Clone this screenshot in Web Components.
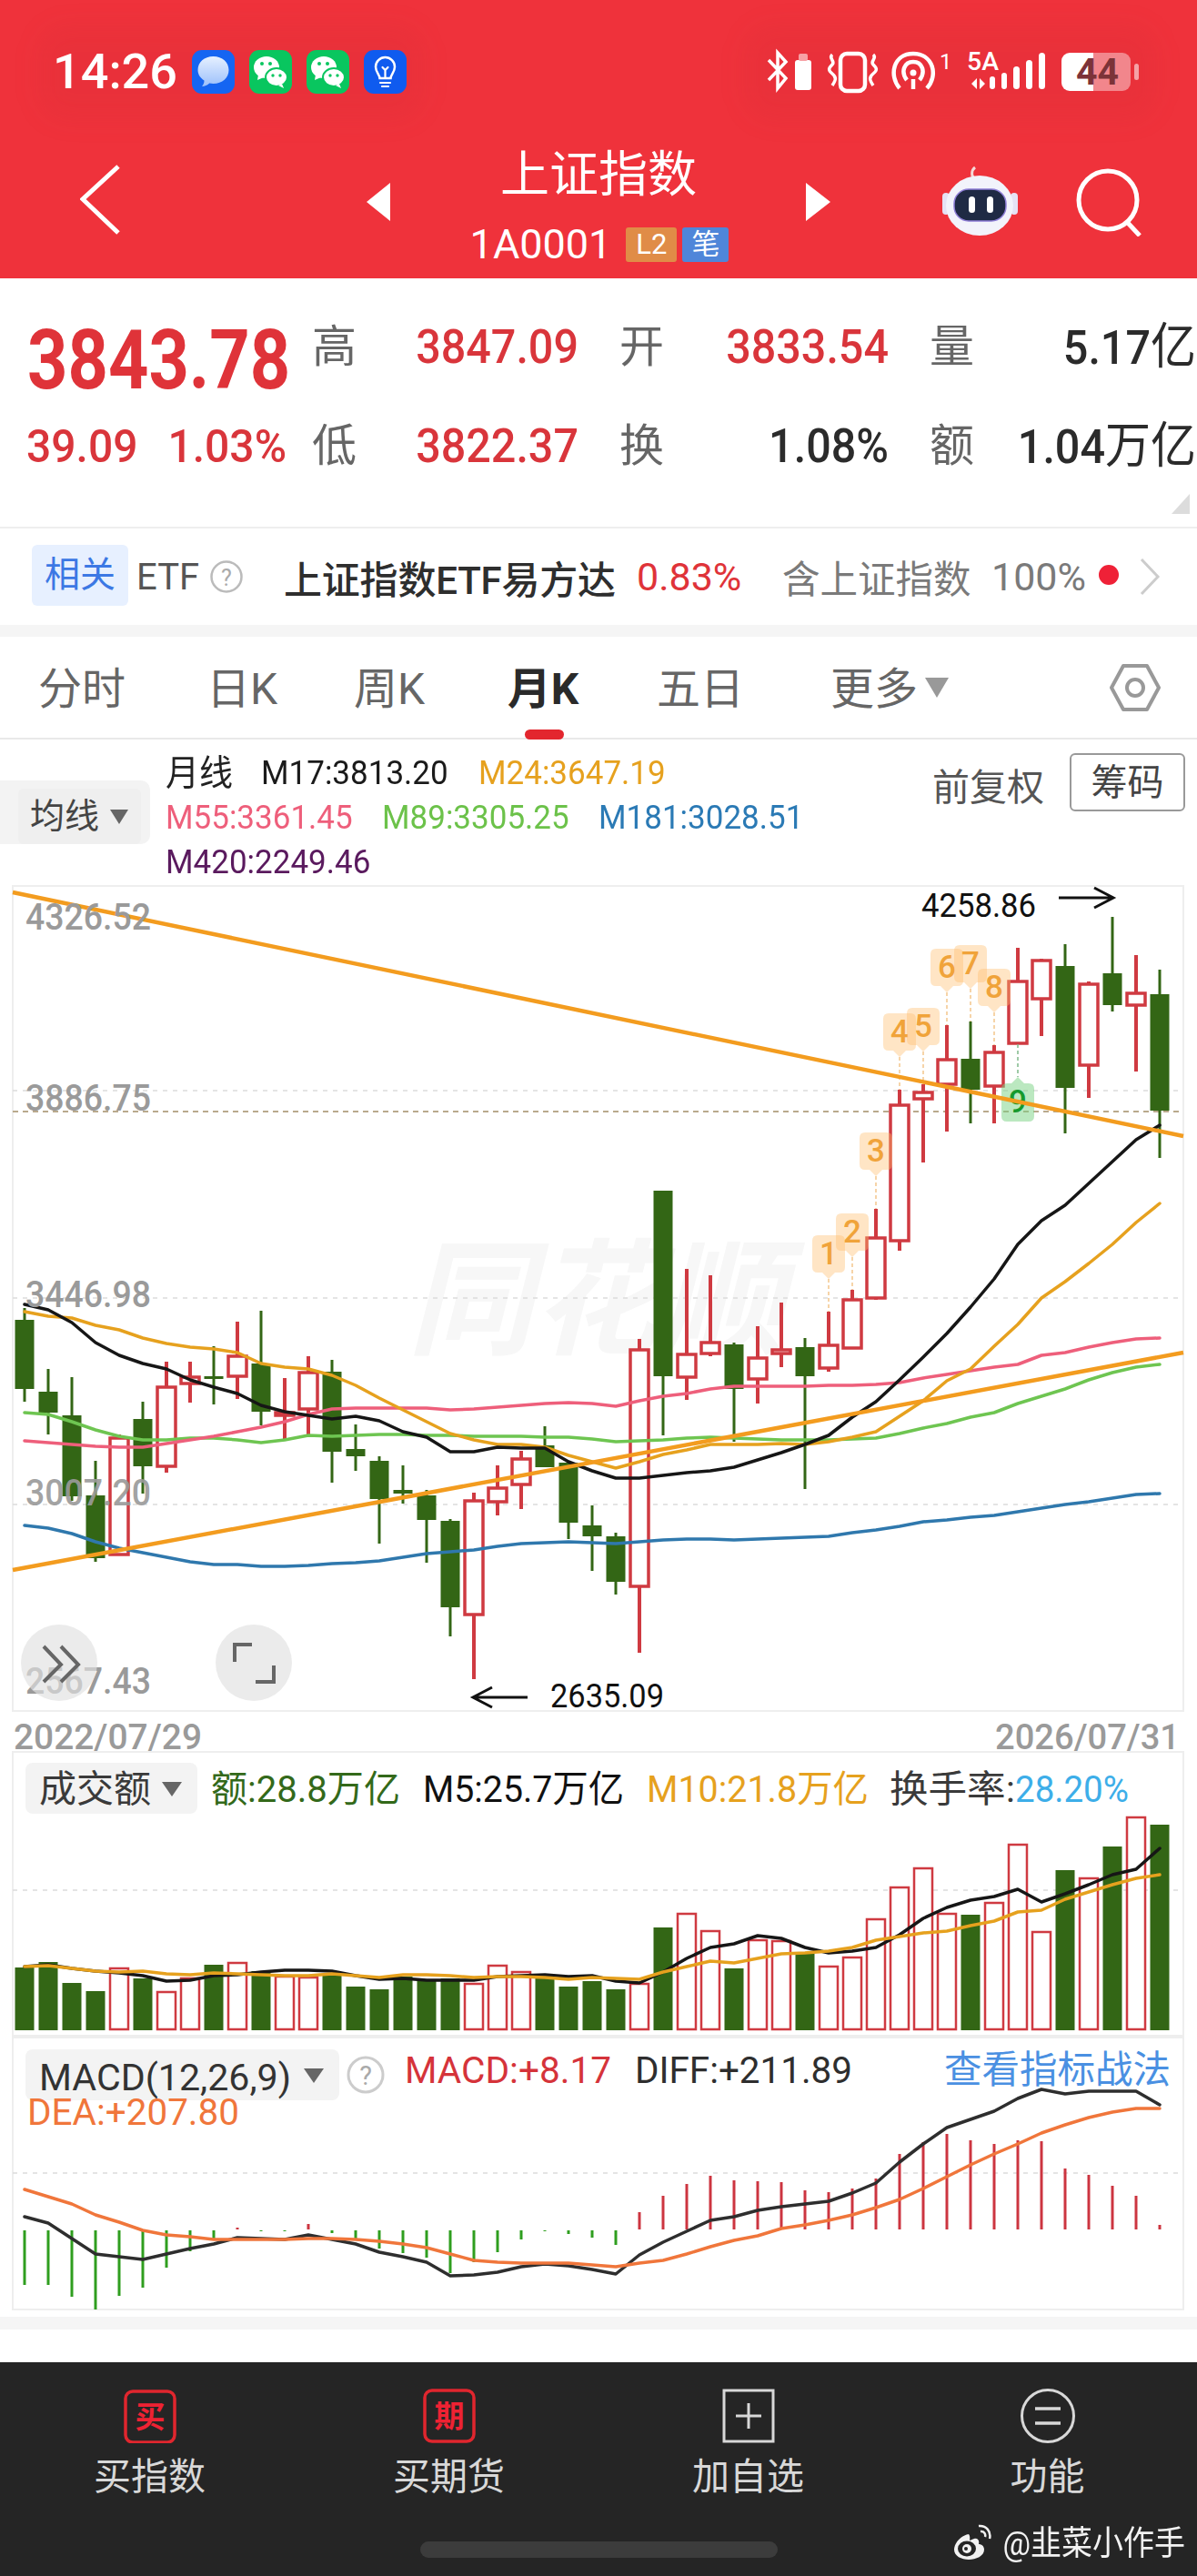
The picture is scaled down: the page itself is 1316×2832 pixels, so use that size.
<!DOCTYPE html>
<html lang="zh">
<head>
<meta charset="utf-8">
<title>上证指数</title>
<style>
  html, body { margin: 0; padding: 0; background: #fff; }
  body { width: 1316px; font-family: Roboto, "Noto Sans CJK SC", sans-serif; }
</style>
</head>
<body>
<quote-header></quote-header>
<quote-stats></quote-stats>
<etf-strip></etf-strip>
<period-tabs></period-tabs>
<ma-legend></ma-legend>
<kline-chart></kline-chart>
<volume-chart></volume-chart>
<macd-chart></macd-chart>
<bottom-bar></bottom-bar>

<script>
const RED = '#cf3a41'
const GREEN = '#336615'
const xAt = i => 27 + 26 * i

const line = (ys, color, width) => {
  const pts = ys.map((y, i) => `${xAt(i)},${y}`).join(' ')
  return `<polyline points="${pts}" fill="none" stroke="${color}" stroke-width="${width}" stroke-linejoin="round" stroke-linecap="round"/>`
}

// text fit to the width measured on the reference
const label = (x, y, str, color, len, size = 40, extra = '') =>
  `<text x="${x}" y="${y}" fill="${color}" font-size="${size}" textLength="${len}" lengthAdjust="spacingAndGlyphs" ${extra}>${str}</text>`

const dashed = (y, color = '#dcdcdc', w = 1.5, dash = '5 6') =>
  `<line x1="14" x2="1301" y1="${y}" y2="${y}" stroke="${color}" stroke-width="${w}" stroke-dasharray="${dash}"/>`

const caret = (x, y, w = 22, h = 16, color = '#666') =>
  `<path d="M${x} ${y}h${w}l${-w / 2} ${h}z" fill="${color}"/>`

class QuoteHeader extends HTMLElement {
  constructor () {
    super()
    this.shadow = this.attachShadow({ mode: 'open' })
  }

  connectedCallback () {
    this.render()
  }

  render () {
    this.shadow.innerHTML = /* html */ `
      <style>
        :host { display: block; height: 306px; background: #ef323b; color: #fff; position: relative; overflow: hidden; }
        .shade { position: absolute; top: 30px; height: 100px; background: rgba(190, 40, 50, .1); filter: blur(14px); border-radius: 30px; }
        .status { position: relative; height: 150px; padding: 55px 61px 0 58px; box-sizing: border-box; display: flex; justify-content: space-between; }
        .left { display: flex; gap: 16px; height: 48px; align-items: center; }
        .time { font-size: 54px; font-weight: 500; line-height: 48px; width: 136px; margin-right: 1px; }
        .app { width: 47px; height: 48px; display: block; }
        .right { width: 412px; height: 56px; margin-top: -5px; display: block; }
        .title-row { position: relative; height: 156px; display: grid; grid-template-columns: 403px 27px 456px 27px 403px; align-items: center; }
        .back { padding-left: 88px; margin-top: -16px; height: 80px; }
        .tri { display: block; width: 27px; height: 42px; margin-top: -12px; }
        .center { display: flex; flex-direction: column; align-items: center; margin-top: -5px; }
        .name { font-size: 54px; line-height: 58px; font-weight: 400; }
        .code { display: flex; align-items: center; margin-top: 28px; height: 38px; transform: translateX(1px); }
        .code b { font-weight: 400; font-size: 45px; line-height: 38px; margin-right: 16px; }
        .tag { height: 38px; line-height: 38px; text-align: center; font-size: 31px; border-radius: 3px; }
        .l2 { width: 56px; background: #e08c47; margin-right: 6px; }
        .bi { width: 51px; background: #4f86d9; }
        .acts { display: flex; justify-content: flex-end; padding-right: 58px; gap: 62px; margin-top: -16px; }
      </style>
      <div class="shade" style="left:44px;width:420px"></div>
      <div class="shade" style="left:820px;width:450px"></div>
      <div class="status">
        <div class="left">
          <span class="time">14:26</span>
          <svg class="app" viewBox="0 0 47 48"><rect width="47" height="48" rx="11" fill="#1565f2"/><defs><linearGradient id="bub" x1="0" y1="0" x2="0" y2="1"><stop offset="0" stop-color="#e6f0ff"/><stop offset="1" stop-color="#9cc0fb"/></linearGradient></defs><path d="M23.500 7c10 0 17 6.500 17 15s-7 15-17 15c-1.500 0-3-.2-4.300-.5-2 2.300-5.200 3.500-8.200 3.500 1.800-2 2.600-4.200 2.500-6.500C9.500 31 6.500 27 6.500 22c0-8.500 7-15 17-15z" fill="url(#bub)"/></svg>
          <svg class="app" viewBox="0 0 47 48"><rect width="47" height="48" rx="11" fill="#09c65f"/><ellipse cx="19" cy="19" rx="14" ry="12" fill="#fff"/><path d="M10 27l-1 6 7-3z" fill="#fff"/><ellipse cx="30" cy="30" rx="12" ry="10" fill="#fff" stroke="#09c65f" stroke-width="2"/><path d="M36 37l2 5-6-3z" fill="#fff"/><circle cx="14" cy="15" r="2" fill="#09c65f"/><circle cx="23" cy="15" r="2" fill="#09c65f"/><circle cx="26" cy="28" r="1.700" fill="#09c65f"/><circle cx="34" cy="28" r="1.700" fill="#09c65f"/></svg>
          <svg class="app" viewBox="0 0 47 48"><rect width="47" height="48" rx="11" fill="#09c65f"/><ellipse cx="19" cy="19" rx="14" ry="12" fill="#fff"/><path d="M10 27l-1 6 7-3z" fill="#fff"/><ellipse cx="30" cy="30" rx="12" ry="10" fill="#fff" stroke="#09c65f" stroke-width="2"/><path d="M36 37l2 5-6-3z" fill="#fff"/><circle cx="14" cy="15" r="2" fill="#09c65f"/><circle cx="23" cy="15" r="2" fill="#09c65f"/><circle cx="26" cy="28" r="1.700" fill="#09c65f"/><circle cx="34" cy="28" r="1.700" fill="#09c65f"/></svg>
          <svg class="app" viewBox="0 0 47 48"><rect width="47" height="48" rx="11" fill="#0f5bef"/><path d="M17.500 31c0-4-4.500-6.500-4.500-12.500a10.500 10.500 0 0 1 21 0c0 6-4.500 8.500-4.500 12.500z" fill="none" stroke="#fff" stroke-width="2.500"/><path d="M18 36h11M20 40h7M23.500 31v-9l-3-3M23.500 22l3-3" fill="none" stroke="#fff" stroke-width="2.200" stroke-linecap="round"/></svg>
        </div>
        <svg class="right" viewBox="846 50 412 56">
          <path d="M848 66l19 20-9 11V58l9 10-19 20" fill="none" stroke="#fff" stroke-width="3.500"/>
          <rect x="877" y="66" width="18" height="33" rx="3" fill="#fff"/><rect x="881" y="59" width="10" height="8" rx="2" fill="#f7a0a4"/>
          <rect x="927" y="59" width="27" height="41" rx="7" fill="none" stroke="#fff" stroke-width="4.500"/>
          <path d="M918 60c-5 4 4 7 0 11s-5 6 0 10 4 7 0 13M963 60c5 4-4 7 0 11s5 6 0 10-4 7 0 13" fill="none" stroke="#fff" stroke-width="3.500"/>
          <path d="M992 97c-12-14-7-38 15-38s28 24 15 38M1000 88c-7-9-3-20 7-20s14 11 7 20M1007 87v11" fill="none" stroke="#fff" stroke-width="4.500"/>
          <circle cx="1007" cy="80" r="3.500" fill="#fff"/>
          <text x="1036" y="76" fill="#fff" font-size="24">1</text>
          <text x="1066" y="77" fill="#fff" font-size="27" font-weight="500" textLength="35" lengthAdjust="spacingAndGlyphs">5A</text>
          <path d="M1071 92l6-6v12zM1086 92l-6-6v12z" fill="#fff"/>
          <rect x="1091" y="84" width="6" height="14" rx="3" fill="#fff"/>
          <rect x="1104" y="80" width="6" height="18" rx="3" fill="#fff"/>
          <rect x="1117" y="73" width="7" height="25" rx="3.500" fill="#fff"/>
          <rect x="1131" y="66" width="7" height="32" rx="3.500" fill="#fff"/>
          <rect x="1145" y="58" width="7" height="40" rx="3.500" fill="#fff"/>
          <path d="M1205 58h-26a9 9 0 0 0-9 9v24a9 9 0 0 0 9 9h26z" fill="#fff"/>
          <path d="M1205 58h32a9 9 0 0 1 9 9v24a9 9 0 0 1-9 9h-32z" fill="#fff" fill-opacity=".42"/>
          <rect x="1250" y="70" width="5" height="18" rx="2.500" fill="#fff" fill-opacity=".55"/>
          <text x="1186" y="93" fill="#7c3338" font-size="41" font-weight="700" textLength="47" lengthAdjust="spacingAndGlyphs">44</text>
        </svg>
      </div>
      <div class="title-row">
        <div class="back"><svg width="44" height="80" viewBox="88 180 44 80"><path d="M130 183l-39 36 39 37" fill="none" stroke="#fff" stroke-width="5"/></svg></div>
        <svg class="tri" viewBox="403 201 27 42"><path d="M429 201l-26 21 26 21z" fill="#fff"/></svg>
        <div class="center">
          <div class="name">上证指数</div>
          <div class="code"><b>1A0001</b><span class="tag l2">L2</span><span class="tag bi">笔</span></div>
        </div>
        <svg class="tri" viewBox="886 201 27 42"><path d="M886 201l27 21-27 21z" fill="#fff"/></svg>
        <div class="acts">
          <svg width="84" height="80" viewBox="1037 180 84 80">
            <path d="M1073 196c-5-2-4-9 0-12" fill="none" stroke="#f5d9d9" stroke-width="3"/>
            <rect x="1037" y="212" width="8" height="24" rx="4" fill="#e5e2f5"/><rect x="1112" y="212" width="8" height="24" rx="4" fill="#e5e2f5"/>
            <ellipse cx="1078" cy="226" rx="37" ry="33" fill="#f2f3fb"/>
            <rect x="1050" y="208" width="57" height="35" rx="16" fill="#1f2a44" stroke="#8f7fd8" stroke-width="1.500"/>
            <rect x="1066" y="216" width="7" height="18" rx="3.500" fill="#fff"/><rect x="1086" y="216" width="7" height="18" rx="3.500" fill="#fff"/>
          </svg>
          <svg width="76" height="80" viewBox="1182 180 76 80"><circle cx="1218" cy="220" r="32" fill="none" stroke="#fff" stroke-width="5"/><path d="M1239 244l14 15" stroke="#fff" stroke-width="5"/></svg>
        </div>
      </div>
    `
  }
}

class QuoteStats extends HTMLElement {
  constructor () {
    super()
    this.shadow = this.attachShadow({ mode: 'open' })
  }

  connectedCallback () {
    this.render()
  }

  render () {
    this.shadow.innerHTML = /* html */ `
      <style>
        :host { display: block; height: 275px; box-sizing: border-box; padding-top: 46px; border-bottom: 2px solid #eee; position: relative; }
        .grid { display: grid; grid-template-columns: 343px 49px 244px 45px 49px 247px 45px 49px 242px; grid-template-rows: 60px 60px; row-gap: 49px; align-items: center; }
        .k { font-size: 49px; color: #666; line-height: 60px; white-space: nowrap; }
        .v { font-size: 48.500px; font-weight: 500; text-align: right; line-height: 60px; white-space: nowrap; transform-origin: right center; transform: scaleY(1.08); color: #2b2b2b; }
        .v.up { color: #d9353b; }
        .v i { font-style: normal; font-size: 50px; font-weight: 400; margin-right: -2px; }
        .price { font-size: 77.500px; font-weight: 700; color: #df3339; padding-left: 30px; margin-top: 30px; line-height: 60px; transform: scaleY(1.17); transform-origin: left center; }
        .chg { color: #d9353b; font-size: 48px; font-weight: 500; padding-left: 29px; display: flex; gap: 33px; transform: scaleY(1.06); line-height: 60px; }
        .corner { position: absolute; right: 8px; bottom: 14px; width: 0; height: 0; border-left: 20px solid transparent; border-bottom: 22px solid #dcdcdc; }
      </style>
      <div class="grid">
        <div class="price">3843.78</div>
        <div class="k">高</div><div class="v up">3847.09</div><div></div>
        <div class="k">开</div><div class="v up">3833.54</div><div></div>
        <div class="k">量</div><div class="v">5.17<i>亿</i></div>
        <div class="chg"><span>39.09</span><span>1.03%</span></div>
        <div class="k">低</div><div class="v up">3822.37</div><div></div>
        <div class="k">换</div><div class="v">1.08%</div><div></div>
        <div class="k">额</div><div class="v">1.04<i>万亿</i></div>
      </div>
      <div class="corner"></div>
    `
  }
}

class EtfStrip extends HTMLElement {
  constructor () {
    super()
    this.shadow = this.attachShadow({ mode: 'open' })
  }

  connectedCallback () {
    this.render()
  }

  render () {
    this.shadow.innerHTML = /* html */ `
      <style>
        :host { display: block; height: 119px; box-sizing: border-box; border-bottom: 13px solid #f5f5f5; }
        .row { display: flex; align-items: center; height: 106px; padding-left: 35px; white-space: nowrap; }
        .chip { width: 106px; height: 67px; line-height: 67px; text-align: center; background: #e7f0ff; color: #3c78e4; font-size: 39px; border-radius: 6px; margin-top: -3px; }
        .etf { font-size: 40px; color: #555; margin-left: 9px; width: 72px; }
        .q { display: block; width: 36px; height: 40px; margin-left: 9px; }
        .name { font-size: 42px; font-weight: 500; color: #2e2e2e; margin-left: 45px; width: 365px; letter-spacing: -.2px; }
        .pct { font-size: 43px; color: #df3339; margin-left: 23px; width: 160px; }
        .sub { font-size: 41.500px; color: #7a7a7a; width: 230px; }
        .w { font-size: 43px; color: #7a7a7a; width: 118px; }
        .dot { width: 22px; height: 22px; border-radius: 50%; background: #ef2137; margin-top: -4px; }
        .more { display: block; margin-left: 22px; width: 24px; height: 44px; }
      </style>
      <div class="row">
        <span class="chip">相关</span>
        <span class="etf">ETF</span>
        <svg class="q" viewBox="0 0 36 40"><circle cx="18" cy="20" r="16.500" fill="none" stroke="#bbb" stroke-width="2.500"/><text x="18" y="30" text-anchor="middle" font-size="25" fill="#aaa">?</text></svg>
        <span class="name">上证指数ETF易方达</span>
        <span class="pct">0.83%</span>
        <span class="sub">含上证指数</span>
        <span class="w">100%</span>
        <span class="dot"></span>
        <svg class="more" viewBox="0 0 24 44"><path d="M3 3l18 19-18 19" fill="none" stroke="#ccc" stroke-width="3"/></svg>
      </div>
    `
  }
}

class PeriodTabs extends HTMLElement {
  constructor () {
    super()
    this.shadow = this.attachShadow({ mode: 'open' })
  }

  connectedCallback () {
    this.render()
  }

  render () {
    this.shadow.innerHTML = /* html */ `
      <style>
        :host { display: block; height: 113px; box-sizing: border-box; border-bottom: 2px solid #e9e9e9; }
        .row { display: grid; grid-template-columns: 180px 172px 152px 186px 160px 256px 1fr; height: 111px; align-items: center; }
        .tab { position: relative; height: 111px; line-height: 116px; text-align: center; font-size: 48px; color: #666; }
        .tab.on { color: #2a2a2a; font-weight: 700; }
        .tab.on::after { content: ""; position: absolute; left: 73px; bottom: -2px; width: 43px; height: 11px; border-radius: 6px; background: #e3262e; }
        .tab svg { margin-left: 8px; vertical-align: 7px; }
        .hex { display: flex; justify-content: flex-end; padding-right: 40px; }
      </style>
      <div class="row">
        <div class="tab">分时</div>
        <div class="tab">日K</div>
        <div class="tab">周K</div>
        <div class="tab on">月K</div>
        <div class="tab">五日</div>
        <div class="tab">更多<svg width="26" height="22" viewBox="0 0 26 22"><path d="M0 0h26L13 22z" fill="#999"/></svg></div>
        <div class="hex"><svg width="56" height="54" viewBox="0 0 56 54"><path d="M15 3h26l13 24-13 24H15L2 27z" fill="none" stroke="#999" stroke-width="4" stroke-linejoin="round"/><circle cx="28" cy="27" r="9" fill="none" stroke="#999" stroke-width="4"/></svg></div>
      </div>
    `
  }
}

class MaLegend extends HTMLElement {
  constructor () {
    super()
    this.shadow = this.attachShadow({ mode: 'open' })
  }

  connectedCallback () {
    this.render()
  }

  render () {
    this.shadow.innerHTML = /* html */ `
      <style>
        :host { display: block; height: 160px; position: relative; }
        .wrap { display: grid; grid-template-columns: 182px 843px 151px 127px; height: 160px; }
        .pick { margin-top: 45px; width: 165px; height: 70px; background: #f3f3f3; border-radius: 0 10px 10px 0; box-sizing: border-box; padding: 9px 10px 0 20px; }
        .pick div { height: 61px; border-radius: 6px; background: #efefef; font-size: 38px; line-height: 61px; padding-left: 13px; color: #444; display: flex; align-items: center; gap: 12px; }
        .rows { padding-top: 12px; }
        .line { display: flex; height: 49px; line-height: 49px; font-size: 35px; white-space: nowrap; }
        .line span { transform: scaleY(1.05); }
        .line .yx { font-size: 37px; color: #222; width: 105px; }
        .w239 { width: 239px; } .w238 { width: 238px; }
        .price { font-size: 41px; color: #555; line-height: 106px; }
        .btn { margin-top: 15px; width: 127px; height: 64px; box-sizing: border-box; border: 2px solid #999; border-radius: 6px; text-align: center; font-size: 40px; line-height: 61px; color: #444; }
      </style>
      <div class="wrap">
        <div class="pick"><div>均线<svg width="20" height="16" viewBox="0 0 20 16"><path d="M0 0h20L10 16z" fill="#666"/></svg></div></div>
        <div class="rows">
          <div class="line"><span class="yx">月线</span><span class="w239" style="color:#1a1a1a">M17:3813.20</span><span style="color:#e6a11e">M24:3647.19</span></div>
          <div class="line"><span class="w238" style="color:#ee5f7b">M55:3361.45</span><span class="w238" style="color:#6cc24a">M89:3305.25</span><span style="color:#2b7ab5">M181:3028.51</span></div>
          <div class="line"><span style="color:#5a1a5e">M420:2249.46</span></div>
        </div>
        <div class="price">前复权</div>
        <div class="btn">筹码</div>
      </div>
    `
  }
}

class KlineChart extends HTMLElement {
  constructor () {
    super()
    this.shadow = this.attachShadow({ mode: 'open' })
  }

  connectedCallback () {
    this.render()
  }

  candles () {
    // body top, body bottom, wick top, wick bottom, colour
    const data = [
      [1451, 1527, 1438, 1541, 'g'], [1530, 1553, 1505, 1577, 'g'], [1556, 1645, 1514, 1650, 'g'], [1644, 1713, 1606, 1717, 'g'],
      [1580, 1710, 1577, 1710, 'r'], [1560, 1612, 1541, 1642, 'g'], [1524, 1613, 1497, 1619, 'r'], [1513, 1522, 1497, 1542, 'r'],
      [1513, 1516, 1480, 1544, 'g'], [1490, 1514, 1453, 1538, 'r'], [1499, 1552, 1441, 1567, 'g'], [1552, 1557, 1515, 1582, 'r'],
      [1508, 1550, 1491, 1577, 'r'], [1508, 1596, 1495, 1630, 'g'], [1593, 1601, 1566, 1617, 'g'], [1606, 1648, 1601, 1697, 'g'],
      [1638, 1642, 1611, 1653, 'g'], [1644, 1671, 1638, 1718, 'g'], [1672, 1767, 1670, 1799, 'g'], [1649, 1776, 1641, 1846, 'r'],
      [1635, 1652, 1611, 1666, 'r'], [1603, 1633, 1595, 1659, 'r'], [1589, 1613, 1568, 1613, 'g'], [1608, 1674, 1607, 1692, 'g'],
      [1677, 1689, 1655, 1727, 'g'], [1689, 1739, 1685, 1753, 'g'], [1483, 1745, 1472, 1817, 'r'], [1309, 1513, 1309, 1578, 'g'],
      [1488, 1515, 1395, 1539, 'r'], [1475, 1489, 1402, 1491, 'r'], [1478, 1527, 1476, 1585, 'g'], [1492, 1517, 1458, 1543, 'r'],
      [1483, 1489, 1432, 1503, 'r'], [1481, 1513, 1471, 1637, 'g'], [1478, 1505, 1442, 1508, 'r'], [1428, 1483, 1418, 1483, 'r'],
      [1360, 1428, 1329, 1429, 'r'], [1214, 1365, 1198, 1375, 'r'], [1200, 1209, 1192, 1278, 'r'], [1164, 1193, 1127, 1244, 'r'],
      [1164, 1198, 1123, 1235, 'g'], [1156, 1195, 1149, 1235, 'r'], [1078, 1148, 1042, 1148, 'r'], [1055, 1099, 1054, 1139, 'r'],
      [1062, 1196, 1038, 1246, 'g'], [1081, 1172, 1079, 1207, 'r'], [1070, 1105, 1008, 1112, 'g'], [1091, 1106, 1050, 1178, 'r'],
      [1093, 1221, 1066, 1273, 'g']
    ]
    return data.map(([top, bottom, hi, lo, c], i) => {
      const x = xAt(i)
      if (c === 'g') {
        return `<line x1="${x}" x2="${x}" y1="${hi}" y2="${lo}" stroke="${GREEN}" stroke-width="3"/><rect x="${x - 10.5}" y="${top}" width="21" height="${bottom - top}" fill="${GREEN}"/>`
      }
      return `<line x1="${x}" x2="${x}" y1="${hi}" y2="${top}" stroke="${RED}" stroke-width="4"/><line x1="${x}" x2="${x}" y1="${bottom}" y2="${lo}" stroke="${RED}" stroke-width="4"/><rect x="${x - 10}" y="${top + 1}" width="20" height="${bottom - top - 2}" fill="#fff" stroke="${RED}" stroke-width="3.500"/>`
    }).join('')
  }

  bubbles () {
    const up = [[34, 1358, 1406, 1442], [35, 1334, 1382, 1418], [36, 1246, 1293, 1329], [37, 1114, 1162, 1198], [38, 1108, 1156, 1192], [39, 1044, 1091, 1127], [40, 1039, 1087, 1123], [41, 1065, 1113, 1149]]
    let out = up.map(([i, top, tip, end], n) => {
      const x = xAt(i)
      return `<line x1="${x}" x2="${x}" y1="${tip}" y2="${end}" stroke="#f4c68c" stroke-width="1.500" stroke-dasharray="4 3"/>
        <path d="M${x - 12} ${top}h24q6 0 6 6v29q0 6-6 6h-5l-7 7-7-7h-5q-6 0-6-6v-29q0-6 6-6z" transform="translate(0 ${tip - top - 48})" fill="rgba(255,190,110,.4)"/>
        <text x="${x}" y="${tip - 16}" text-anchor="middle" font-size="35" font-weight="500" fill="#f0a33a">${n + 1}</text>`
    }).join('')
    const x = xAt(42)
    out += `<line x1="${x}" x2="${x}" y1="1148" y2="1184" stroke="#7fb98a" stroke-width="1.500" stroke-dasharray="4 3"/>
      <path d="M${x} 1184l7 7h5q6 0 6 6v30q0 6-6 6h-24q-6 0-6-6v-30q0-6 6-6h5z" fill="rgba(120,210,130,.5)"/>
      <text x="${x}" y="1223" text-anchor="middle" font-size="35" font-weight="500" fill="#159a2c">9</text>`
    return out
  }

  render () {
    const ma17 = [1434, 1440, 1454, 1476, 1490, 1499, 1505, 1517, 1525, 1532, 1545, 1552, 1556, 1560, 1557, 1562, 1574, 1580, 1596, 1596, 1591, 1592, 1592, 1607, 1617, 1625, 1625, 1622, 1619, 1617, 1613, 1605, 1597, 1588, 1578, 1558, 1541, 1517, 1492, 1466, 1437, 1406, 1368, 1342, 1325, 1301, 1277, 1253, 1237]
    const ma24 = [1442, 1447, 1449, 1457, 1462, 1471, 1477, 1481, 1483, 1487, 1499, 1503, 1505, 1512, 1523, 1537, 1550, 1563, 1576, 1583, 1588, 1588, 1591, 1600, 1607, 1614, 1607, 1599, 1594, 1588, 1588, 1588, 1587, 1588, 1585, 1580, 1574, 1557, 1540, 1518, 1505, 1480, 1456, 1427, 1409, 1389, 1368, 1344, 1323]
    const ma55 = [1584, 1586, 1588, 1590, 1591, 1591, 1587, 1583, 1579, 1574, 1569, 1563, 1555, 1549, 1548, 1548, 1548, 1548, 1550, 1549, 1547, 1545, 1543, 1542, 1543, 1546, 1540, 1535, 1532, 1527, 1524, 1524, 1524, 1524, 1523, 1523, 1522, 1520, 1515, 1511, 1507, 1503, 1500, 1490, 1487, 1481, 1476, 1472, 1471]
    const ma89 = [1553, 1555, 1563, 1572, 1579, 1583, 1583, 1581, 1581, 1583, 1586, 1583, 1578, 1579, 1578, 1577, 1577, 1578, 1578, 1579, 1579, 1579, 1580, 1580, 1582, 1585, 1584, 1583, 1581, 1580, 1581, 1582, 1583, 1583, 1583, 1582, 1581, 1576, 1570, 1565, 1558, 1553, 1543, 1535, 1527, 1517, 1509, 1503, 1500]
    const ma181 = [1677, 1680, 1686, 1695, 1702, 1707, 1712, 1717, 1720, 1720, 1722, 1722, 1721, 1719, 1718, 1716, 1712, 1708, 1706, 1704, 1700, 1697, 1696, 1695, 1696, 1697, 1695, 1693, 1692, 1692, 1693, 1692, 1691, 1690, 1689, 1685, 1682, 1678, 1673, 1671, 1668, 1666, 1662, 1658, 1654, 1651, 1647, 1643, 1642]
    const gray = '#9a9a9a'
    this.shadow.innerHTML = /* html */ `
      <style>
        :host { display: block; height: 952px; }
        svg { display: block; overflow: visible; }
        text { font-family: Roboto, "Noto Sans CJK SC", sans-serif; }
      </style>
      <svg width="1316" height="952" viewBox="0 973 1316 952">
        <rect x="14" y="974" width="1287" height="907" fill="#fff" stroke="#eee" stroke-width="2"/>
        <text x="448" y="1478" font-size="138" font-weight="700" font-style="italic" fill="#f7f7f7">同花顺</text>
        ${dashed(1199)}${dashed(1427)}${dashed(1654)}
        ${dashed(1222, '#b9a98c', 2, '6 5')}
        ${this.candles()}
        ${this.bubbles()}
        ${line(ma181, '#2f78ad', 3.5)}
        ${line(ma89, '#6ec551', 3.5)}
        ${line(ma55, '#ee5f7b', 3.5)}
        ${line(ma24, '#e6a11e', 3.5)}
        ${line(ma17, '#161616', 3.5)}
        <path d="M14 981L1301 1249M14 1726L1301 1487" stroke="#f39c1f" stroke-width="4.500" fill="none"/>
        ${label(28, 1022, '4326.52', gray, 138, 40, 'font-weight="500"')}
        ${label(28, 1221, '3886.75', gray, 138, 40, 'font-weight="500"')}
        ${label(28, 1437, '3446.98', gray, 138, 40, 'font-weight="500"')}
        ${label(28, 1655, '3007.20', 'rgba(154,154,154,.92)', 138, 40, 'font-weight="500"')}
        ${label(28, 1862, '2567.43', gray, 138, 40, 'font-weight="500"')}
        ${label(1013, 1008, '4258.86', '#111', 126, 36)}
        <path d="M1164 987h59M1203 976l21 11-21 11" fill="none" stroke="#111" stroke-width="3"/>
        ${label(605, 1877, '2635.09', '#111', 125, 36)}
        <path d="M580 1866h-59M541 1855l-21 11 21 11" fill="none" stroke="#111" stroke-width="3"/>
        <circle cx="65" cy="1828" r="42" fill="rgba(225,225,225,.65)"/>
        <path d="M48 1810l19 20-19 19M67 1810l19 20-19 19" fill="none" stroke="#666" stroke-width="4"/>
        <circle cx="279" cy="1828" r="42" fill="rgba(225,225,225,.65)"/>
        <path d="M277 1808h-19v19M281 1849h20v-18" fill="none" stroke="#666" stroke-width="4"/>
        ${label(15, 1923, '2022/07/29', gray, 207, 38, 'font-weight="500"')}
        ${label(1094, 1923, '2026/07/31', gray, 203, 38, 'font-weight="500"')}
      </svg>
    `
  }
}

class VolumeChart extends HTMLElement {
  constructor () {
    super()
    this.shadow = this.attachShadow({ mode: 'open' })
  }

  connectedCallback () {
    this.render()
  }

  render () {
    const tops = [2163, 2157, 2180, 2189, -2164, 2175, -2190, -2175, 2160, -2158, 2167, -2173, -2174, 2170, 2184, 2187, 2173, 2178, 2175, -2181, -2161, -2168, 2175, 2184, 2178, 2187, -2181, 2119, -2104, -2123, 2164, -2133, -2134, 2147, -2162, -2152, -2110, -2075, -2054, -2104, 2105, -2092, -2028, -2124, 2056, -2065, 2030, -1998, 2006]
    const base = 2232
    const bars = tops.map((v, i) => {
      const x = xAt(i)
      if (v > 0) return `<rect x="${x - 10.5}" y="${v}" width="21" height="${base - v}" fill="${GREEN}"/>`
      return `<rect x="${x - 10}" y="${-v}" width="20" height="${base + v - 1}" fill="#fff" stroke="${RED}" stroke-width="2.500"/>`
    }).join('')
    const black = [2162, 2160, 2164, 2167, 2169, 2172, 2178, 2177, 2172, 2171, 2168, 2166, 2166, 2167, 2172, 2176, 2175, 2177, 2177, 2177, 2173, 2172, 2171, 2173, 2172, 2178, 2180, 2168, 2153, 2141, 2137, 2128, 2131, 2141, 2147, 2145, 2141, 2127, 2109, 2097, 2089, 2085, 2077, 2091, 2082, 2072, 2061, 2055, 2032]
    const gold = [2162, 2161, 2164, 2167, 2168, 2167, 2170, 2171, 2169, 2170, 2171, 2172, 2172, 2170, 2172, 2174, 2171, 2171, 2172, 2174, 2173, 2173, 2174, 2176, 2174, 2175, 2176, 2168, 2162, 2156, 2158, 2153, 2148, 2147, 2145, 2141, 2133, 2129, 2125, 2123, 2117, 2112, 2102, 2100, 2088, 2080, 2072, 2065, 2061]
    this.shadow.innerHTML = /* html */ `
      <style>
        :host { display: block; height: 314px; }
        svg { display: block; overflow: visible; }
        text { font-family: Roboto, "Noto Sans CJK SC", sans-serif; }
      </style>
      <svg width="1316" height="314" viewBox="0 1925 1316 314">
        <rect x="14" y="1926" width="1287" height="312" fill="none" stroke="#eee" stroke-width="2"/>
        ${dashed(2078)}
        ${bars}
        ${line(black, '#161616', 3.5)}
        ${line(gold, '#e6a11e', 3.5)}
        <rect x="28" y="1938" width="189" height="56" rx="8" fill="#f3f3f3"/>
        ${label(43, 1981, '成交额', '#3a3a3a', 123, 41)}
        ${caret(178, 1959)}
        ${label(232, 1981, '额:28.8万亿', '#33691a', 208, 41)}
        ${label(465, 1981, 'M5:25.7万亿', '#111', 221, 41)}
        ${label(711, 1981, 'M10:21.8万亿', '#e6a11e', 244, 41)}
        ${label(978, 1981, '换手率:', '#3a3a3a', 138, 41)}
        ${label(1116, 1981, '28.20%', '#3daee9', 125, 41)}
      </svg>
    `
  }
}

class MacdChart extends HTMLElement {
  constructor () {
    super()
    this.shadow = this.attachShadow({ mode: 'open' })
  }

  connectedCallback () {
    this.render()
  }

  render () {
    const zero = 2451
    // y of the far end of each bar, above zero is red
    const ends = [2512, 2512, 2525, 2539, 2524, 2515, 2493, 2475, 2461, 2449, 2453, 2453, 2445, 2455, 2462, 2472, 2477, 2482, 2499, 2487, 2476, 2462, 2453, 2456, 2460, 2468, 2432, 2414, 2401, 2392, 2397, 2398, 2399, 2408, 2410, 2406, 2395, 2368, 2355, 2346, 2353, 2357, 2353, 2354, 2384, 2391, 2403, 2414, 2446]
    const bars = ends.map((y, i) => {
      const x = xAt(i)
      const down = y > zero
      const a = down ? zero + 1 : y
      const b = down ? y : zero
      return `<line x1="${x}" x2="${x}" y1="${a}" y2="${b}" stroke="${down ? '#2f9e1f' : '#cc3540'}" stroke-width="3"/>`
    }).join('')
    const diff = [2437, 2444, 2461, 2478, 2481, 2484, 2478, 2472, 2467, 2460, 2461, 2462, 2457, 2462, 2467, 2476, 2481, 2487, 2502, 2501, 2498, 2492, 2489, 2491, 2495, 2500, 2479, 2465, 2453, 2441, 2437, 2430, 2426, 2423, 2420, 2411, 2400, 2377, 2357, 2339, 2330, 2321, 2307, 2297, 2302, 2299, 2299, 2299, 2314]
    const dea = [2407, 2415, 2423, 2435, 2443, 2452, 2457, 2459, 2462, 2462, 2462, 2462, 2461, 2461, 2462, 2464, 2467, 2471, 2478, 2485, 2487, 2488, 2488, 2488, 2490, 2492, 2488, 2485, 2478, 2470, 2463, 2458, 2450, 2446, 2441, 2435, 2427, 2418, 2406, 2393, 2380, 2368, 2357, 2345, 2336, 2328, 2322, 2318, 2318]
    this.shadow.innerHTML = /* html */ `
      <style>
        :host { display: block; height: 322px; border-bottom: 14px solid #f5f5f5; box-sizing: border-box; }
        svg { display: block; }
        text { font-family: Roboto, "Noto Sans CJK SC", sans-serif; }
      </style>
      <svg width="1316" height="308" viewBox="0 2239 1316 308">
        <rect x="14" y="2240" width="1287" height="299" fill="#fff" stroke="#eee" stroke-width="2"/>
        ${dashed(2389)}
        ${bars}
        ${line(diff, '#2e2e2e', 3.5)}
        ${line(dea, '#f0763b', 3.5)}
        <rect x="28" y="2253" width="345" height="56" rx="8" fill="#f3f3f3"/>
        ${label(43, 2298, 'MACD(12,26,9)', '#333', 277, 41)}
        ${caret(334, 2274)}
        <circle cx="402" cy="2281" r="19" fill="none" stroke="#ccc" stroke-width="3"/>
        <text x="402" y="2292" text-anchor="middle" font-size="29" fill="#aaa">?</text>
        ${label(445, 2290, 'MACD:+8.17', '#d5333a', 227, 41)}
        ${label(698, 2290, 'DIFF:+211.89', '#2e2e2e', 239, 41)}
        ${label(1038, 2290, '查看指标战法', '#4a90e2', 249, 41.5)}
        ${label(30, 2336, 'DEA:+207.80', '#f0763b', 233, 41)}
      </svg>
    `
  }
}

class BottomBar extends HTMLElement {
  constructor () {
    super()
    this.shadow = this.attachShadow({ mode: 'open' })
  }

  connectedCallback () {
    this.render()
  }

  render () {
    this.shadow.innerHTML = /* html */ `
      <style>
        :host { display: block; margin-top: 36px; height: 235px; background: #252525; position: relative; color: #d8d8d8; }
        .tabs { display: grid; grid-template-columns: repeat(4, 329px); padding-top: 29px; }
        .item { display: flex; flex-direction: column; align-items: center; }
        .item svg { display: block; }
        .item span { font-size: 41px; line-height: 50px; margin-top: 12px; }
        .pill { width: 393px; height: 18px; border-radius: 9px; background: #3c3c3c; margin: 46px 0 0 462px; }
        .mark { position: absolute; right: 13px; bottom: 14px; display: flex; align-items: center; gap: 10px; font-size: 34px; color: #f2f2f2; line-height: 44px; }
        .mark span { transform: scaleY(1.1); }
        .mark svg { margin-bottom: 2px; }
      </style>
      <div class="tabs">
        <div class="item">
          <svg width="58" height="60" viewBox="0 0 58 60"><rect x="2" y="3" width="54" height="56" rx="8" fill="none" stroke="#e0262e" stroke-width="3.500"/><text x="29" y="43" text-anchor="middle" font-size="33" font-weight="700" fill="#ee2233">买</text></svg>
          <span>买指数</span>
        </div>
        <div class="item">
          <svg width="58" height="60" viewBox="0 0 58 60"><rect x="2" y="2" width="54" height="56" rx="8" fill="none" stroke="#e0262e" stroke-width="3.500"/><text x="29" y="42" text-anchor="middle" font-size="33" font-weight="700" fill="#ee2233">期</text></svg>
          <span>买期货</span>
        </div>
        <div class="item">
          <svg width="58" height="60" viewBox="0 0 58 60"><rect x="2" y="2" width="54" height="56" fill="none" stroke="#d8d8d8" stroke-width="3"/><path d="M29 16v28M15 30h28" stroke="#d8d8d8" stroke-width="3"/></svg>
          <span>加自选</span>
        </div>
        <div class="item">
          <svg width="62" height="60" viewBox="0 0 62 60"><circle cx="31" cy="30" r="28.500" fill="none" stroke="#d8d8d8" stroke-width="3"/><path d="M17 22h28M17 38h28" stroke="#d8d8d8" stroke-width="3.500"/></svg>
          <span>功能</span>
        </div>
      </div>
      <div class="pill"></div>
      <div class="mark">
        <svg width="44" height="40" viewBox="0 0 44 40"><path d="M17 11C7 13 1 22 1 28c0 7 8 11 16 11s17-4 17-11c0-4-3-6-6-6 1-4-1-7-5-6-3 1-5 2-5 2s1-5-1-7z" fill="#f2f2f2"/><ellipse cx="15" cy="27" rx="10" ry="8.500" fill="#252525"/><circle cx="15" cy="27" r="5" fill="#f2f2f2"/><circle cx="14" cy="27" r="2" fill="#252525"/><path d="M28 2c8-1 14 6 12 14M30 8c4-.5 6 3 5 6" fill="none" stroke="#f2f2f2" stroke-width="2.500"/></svg>
        <span>@韭菜小作手</span>
      </div>
    `
  }
}

customElements.define('quote-header', QuoteHeader)
customElements.define('quote-stats', QuoteStats)
customElements.define('etf-strip', EtfStrip)
customElements.define('period-tabs', PeriodTabs)
customElements.define('ma-legend', MaLegend)
customElements.define('kline-chart', KlineChart)
customElements.define('volume-chart', VolumeChart)
customElements.define('macd-chart', MacdChart)
customElements.define('bottom-bar', BottomBar)
</script>
</body>
</html>
